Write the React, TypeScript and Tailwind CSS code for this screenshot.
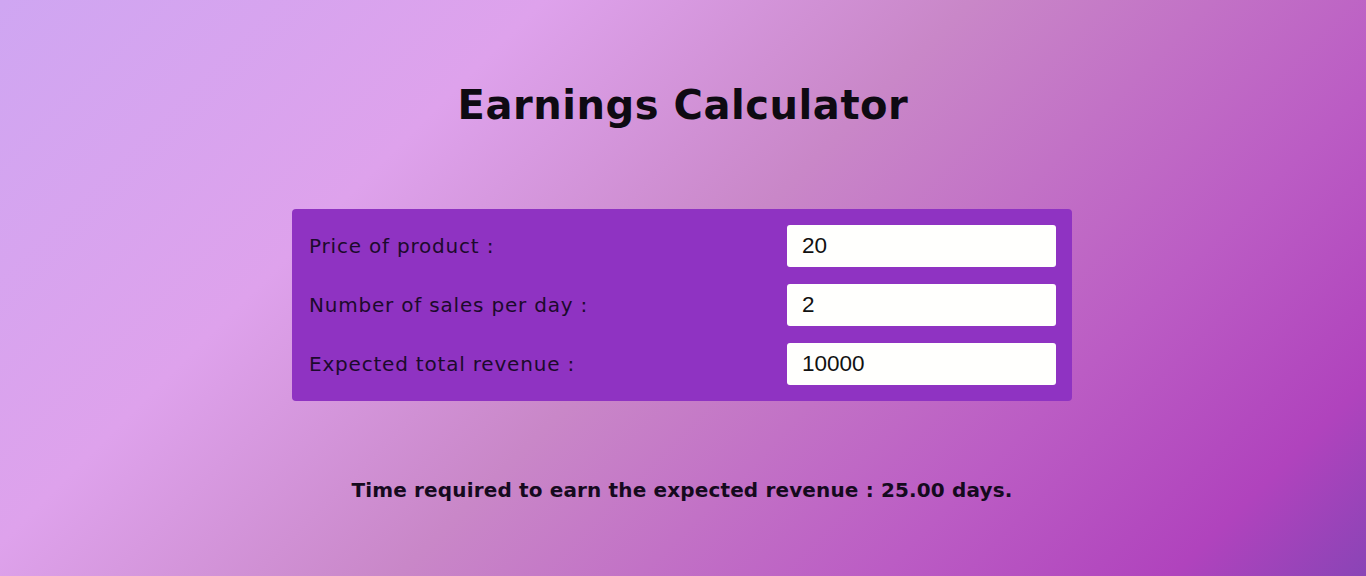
const rows = [
  { label: "Price of product :", value: "20" },
  { label: "Number of sales per day :", value: "2" },
  { label: "Expected total revenue :", value: "10000" },
];

export default function App() {
  return (
    <div className="min-h-[576px] w-full flex flex-col items-center bg-[linear-gradient(135deg,#cfa6f2_0%,#dea2ec_28%,#c987c8_50%,#bb5cc4_75%,#b043bd_90%,#8a44b6_100%)] font-['DejaVu_Sans',sans-serif] text-[#140a1c]">
      <h1 className="mt-[77px] text-[40px] leading-[56px] font-bold tracking-[0.55px] text-[#0e0a12]">
        Earnings Calculator
      </h1>

      <div className="mt-[76px] mr-[2px] w-[780px] rounded-[4px] bg-[#8f33c2] px-4 py-4 flex flex-col gap-[17px]">
        {rows.map((r) => (
          <div key={r.label} className="flex items-center justify-between pl-px">
            <label className="text-[20px] tracking-[0.8px] text-[#1c0a2c]">{r.label}</label>
            <input
              readOnly
              value={r.value}
              className="w-[269px] h-[42px] rounded-[3px] bg-[#fffffd] pl-[15px] text-[22.5px] text-[#111] font-['Liberation_Sans',Arial,sans-serif] outline-none"
            />
          </div>
        ))}
      </div>

      <p className="mt-[74px] mr-[2px] text-[20px] tracking-[0.15px] font-bold text-[#150a1e]">
        Time required to earn the expected revenue : 25.00 days.
      </p>
    </div>
  );
}
